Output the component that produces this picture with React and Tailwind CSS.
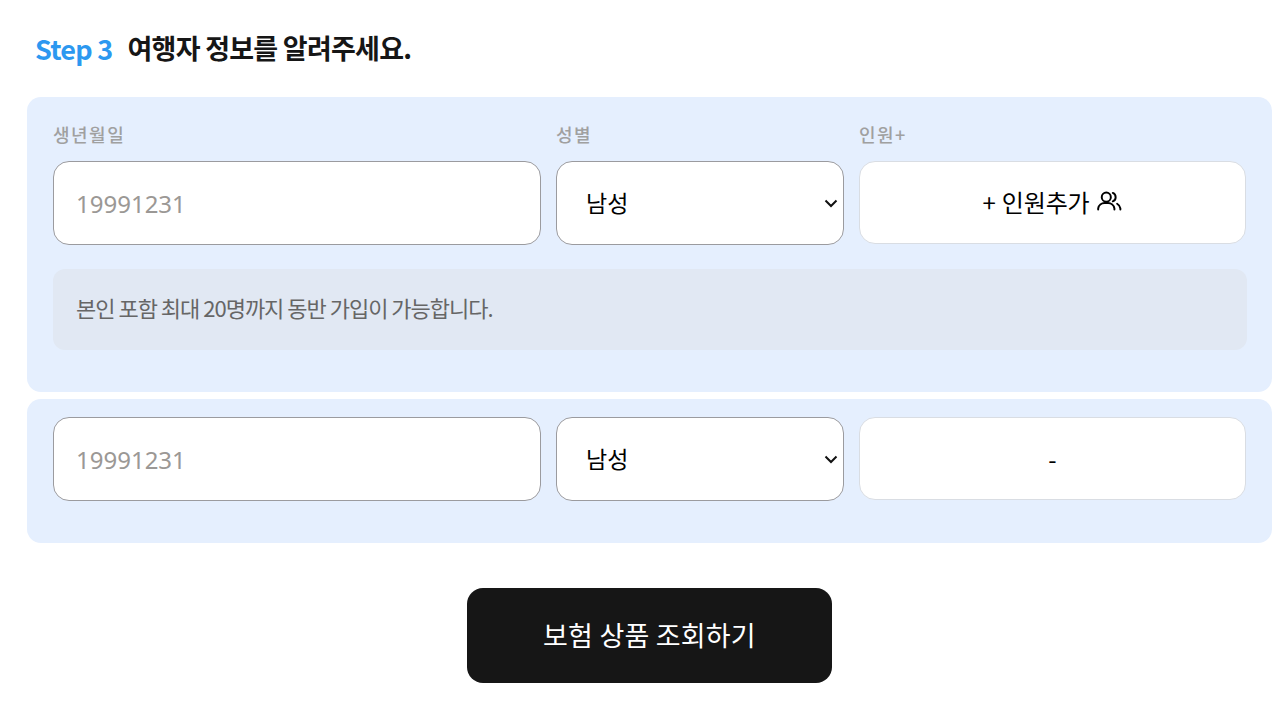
import React from "react";

const font = { fontFamily: '"Noto Sans CJK KR", "Noto Sans", sans-serif' };
const inputFont = { fontFamily: '"Noto Sans", "Noto Sans CJK KR", sans-serif' };

function UsersIcon() {
  return (
    <svg width="26" height="26" viewBox="0 0 24 24" fill="none" stroke="currentColor" strokeWidth="1.8" strokeLinecap="round" strokeLinejoin="round" className="ml-[7px] shrink-0">
      <circle cx="9.5" cy="7.5" r="4.2" />
      <path d="M2 19v-1a6 6 0 0 1 6-5h3a6 6 0 0 1 6 5v1" />
      <path d="M15.5 3.6a4.2 4.2 0 0 1 0 7.8" />
      <path d="M19.5 13.6a6 6 0 0 1 3 4.4v1" />
    </svg>
  );
}

function Row({ buttonContent, labels }) {
  return (
    <div>
      {labels && (
        <div className="flex gap-[15px] h-[26px] -mt-[2px] mb-[14px] items-center text-[18px] font-medium tracking-[1.5px] text-[#a0a0a0]">
          <div className="w-[488px]">생년월일</div>
          <div className="w-[288px]">성별</div>
          <div className="w-[387px]">인원+</div>
        </div>
      )}
      <div className="flex gap-[15px]">
        <input
          className="w-[488px] h-[84px] shrink-0 rounded-[16px] border border-[#9b9b9f] bg-white pl-[22px] text-[24px] text-black outline-none placeholder:text-[#9b9895]"
          placeholder="19991231"
          style={inputFont}
        />
        <div className="relative w-[288px] h-[84px] shrink-0">
          <select
            defaultValue="남성"
            className="w-full h-full appearance-none rounded-[16px] border border-[#9b9b9f] bg-white pl-[29px] pb-[1px] text-[23px] text-black outline-none"
            style={font}
          >
            <option>남성</option>
            <option>여성</option>
          </select>
          <svg width="14" height="9" viewBox="0 0 14 9" fill="none" stroke="#111" strokeWidth="2" className="absolute right-[6px] top-[38px] pointer-events-none">
            <path d="M1.5 1.5 7 7l5.5-5.5" />
          </svg>
        </div>
        <button className="w-[387px] h-[83px] shrink-0 flex items-center justify-center rounded-[16px] border border-[#d9dde3] bg-white pb-[1px] text-[24px] text-black">
          {buttonContent}
        </button>
      </div>
    </div>
  );
}

export default function App() {
  return (
    <div className="w-[1287px] h-[704px] bg-white overflow-hidden pl-[27px] pr-[15px] pt-[29px]" style={font}>
      <h2 className="flex items-center h-[40px] pl-[8px] text-[27px] font-bold tracking-[-0.75px] text-[#161616] mb-[28px]">
        <span className="text-[#2c98f0] font-semibold mr-[15px]">Step 3</span>
        <span className="pb-[2px]">여행자 정보를 알려주세요.</span>
      </h2>

      <section className="h-[295px] rounded-[14px] bg-[#e5effe] px-[26px] pt-[26px]">
        <Row labels buttonContent={<><span className="tracking-[-0.2px] [word-spacing:1px]">+ 인원추가</span><UsersIcon /></>} />
        <div className="mt-[24px] h-[81px] w-[1194px] flex items-center rounded-[12px] bg-[#e1e8f3] pl-[23px] pb-[4px] text-[22px] tracking-[-1px] text-[#666666]">
          본인 포함 최대 20명까지 동반 가입이 가능합니다.
        </div>
      </section>

      <section className="mt-[7px] h-[144px] rounded-[14px] bg-[#e5effe] px-[26px] pt-[18px]">
        <Row buttonContent={<span className="pt-[2px]">-</span>} />
      </section>

      <div className="flex justify-center mt-[45px]">
        <button className="w-[365px] h-[95px] rounded-[16px] bg-[#161616] text-white text-[27px] tracking-[0.2px]">
          보험 상품 조회하기
        </button>
      </div>
    </div>
  );
}
